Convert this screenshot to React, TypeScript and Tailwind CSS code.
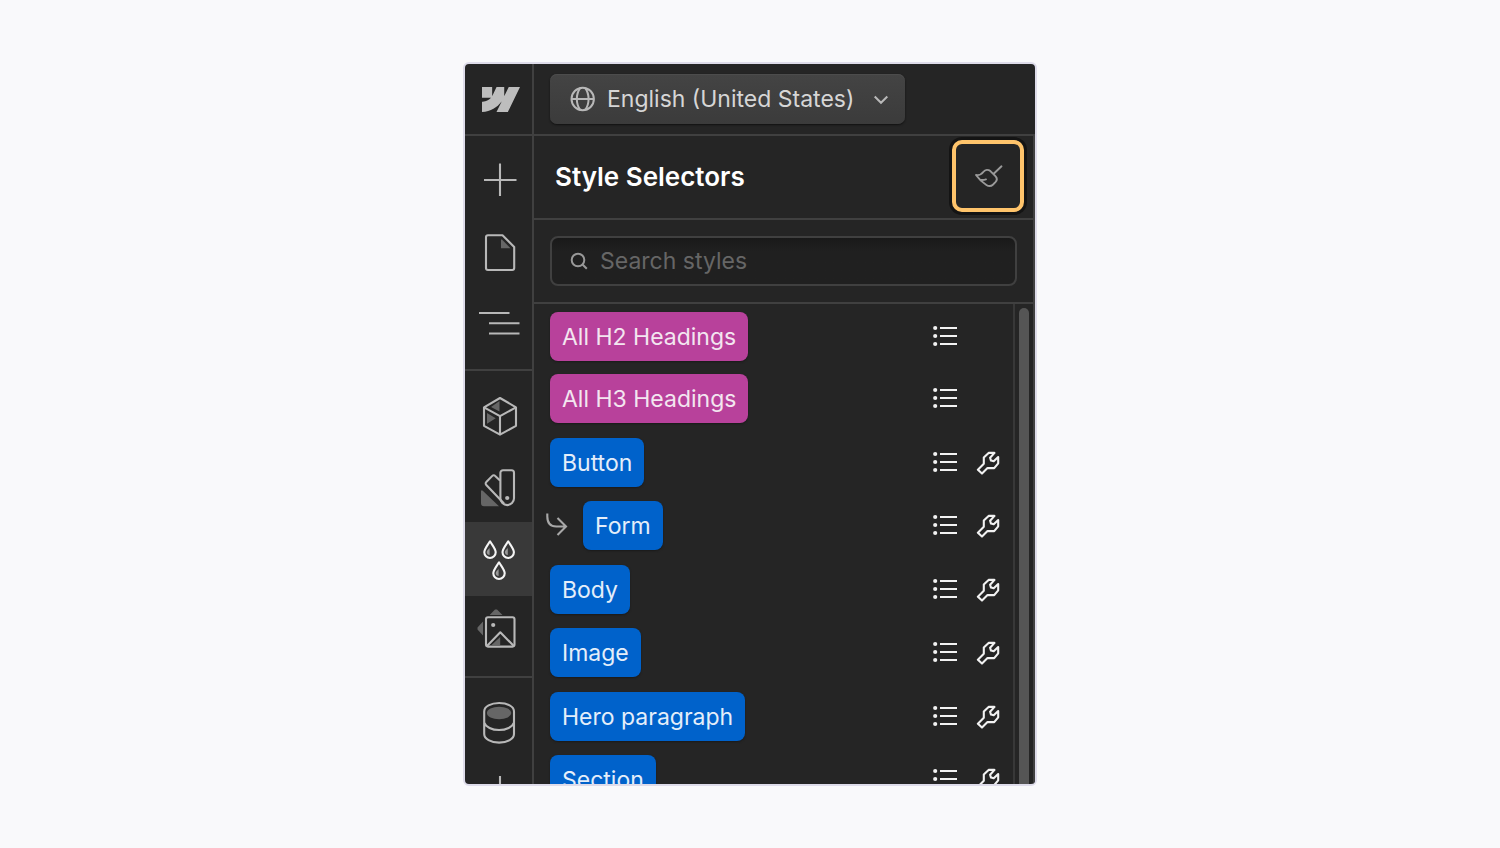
import type { ReactNode } from "react";

type Selector = { name: string; kind: "tag" | "class"; nested?: boolean };

const selectors: Selector[] = [
  { name: "All H2 Headings", kind: "tag" },
  { name: "All H3 Headings", kind: "tag" },
  { name: "Button", kind: "class" },
  { name: "Form", kind: "class", nested: true },
  { name: "Body", kind: "class" },
  { name: "Image", kind: "class" },
  { name: "Hero paragraph", kind: "class" },
  { name: "Section", kind: "class" },
];

function RailButton({ label, active, children }: { label: string; active?: boolean; children: ReactNode }) {
  return (
    <button
      type="button"
      aria-label={label}
      aria-pressed={active}
      className={active ? "block h-[74px] w-full bg-[#393939] text-[#f5f5f5]" : "block h-[72px] w-full text-[#b8b8b8]"}
    >
      <svg viewBox="0 0 67 72" width="67" height="72" fill="none" stroke="currentColor" strokeWidth="2.1" strokeLinejoin="round">
        {children}
      </svg>
    </button>
  );
}

function Drop({ x, y }: { x: number; y: number }) {
  return (
    <g transform={`translate(${x} ${y})`}>
      <path d="M0 1.3C-2.2 5-5.7 8.800-5.700 12.300a5.700 5.700 0 0 0 11.400 0C5.700 8.800 2.200 5 0 1.300Z" />
      <path d="M-.4 8C-1.500 9.300-3.300 10.500-3.300 12.300c0 1.500 1.300 2.600 2.900 2.800Z" fill="#999" stroke="none" />
    </g>
  );
}

function Rail() {
  return (
    <nav aria-label="Tools" className="flex flex-col overflow-hidden border-r-2 border-[#404040]">
      <div className="shrink-0 border-b-2 border-[#404040] pb-[9px] pt-2">
        <RailButton label="Add element">
          <path d="M19 36h32.500M35 19.500v32.500" />
        </RailButton>
        <RailButton label="Pages">
          <path d="M23 19.200H37.500L49.200 31V52a2 2 0 0 1-2 2H23a2 2 0 0 1-2-2V21.200a2 2 0 0 1 2-2Z" />
          <path d="M36 23.500h1l8.500 8.800H36Z" fill="#666" stroke="none" />
        </RailButton>
        <RailButton label="Navigator">
          <path d="M14 25h30.500M24 35.200h30.500M24 45.500h30.500" />
        </RailButton>
      </div>
      <div className="shrink-0 border-b-2 border-[#404040] pb-2 pt-[7px]">
        <RailButton label="Components">
          <g transform="translate(0 1)">
            <path d="M35 19l16 9.300v18.500L35 55.700 19 46.800V28.300ZM19 28.300 35 37.200l16-8.900M35 37.200v18.500" />
            <path d="M34.500 22v10.500L26 28ZM22 34l8.700 5.200L22 44.700Z" fill="#666" stroke="none" />
          </g>
        </RailButton>
        <RailButton label="Variables">
          <g transform="translate(0 1)">
            <path d="M38 19.300h8.500a2.500 2.500 0 0 1 2.500 2.500v25.500a6.800 6.800 0 0 1-13.600 0V21.800a2.500 2.500 0 0 1 2.600-2.500Z" />
            <path d="M35 29.500l-4.800-4.600a2 2 0 0 0-2.900 0l-6 6.200a2 2 0 0 0 0 2.900L39 52.500" />
            <path d="M16 39.500h1.500L34 55.300H19a3 3 0 0 1-3-3Z" fill="#666" stroke="none" />
            <circle cx="42.200" cy="47" r="2.100" fill="currentColor" stroke="none" />
          </g>
        </RailButton>
        <RailButton label="Style selectors" active>
          <Drop x={25} y={17} />
          <Drop x={43.2} y={17} />
          <Drop x={34} y={38} />
        </RailButton>
        <RailButton label="Assets">
          <g transform="translate(0 2)">
            <rect x="21" y="19.300" width="28.500" height="29.300" rx="2" />
            <path d="M22 48 35.300 34.300l13.500 13.700" />
            <circle cx="28.200" cy="27" r="2.100" fill="currentColor" stroke="none" />
            <path d="M24.700 17 30 11.500h2l5.500 5.500ZM18 23.500v14l-5.500-6v-2ZM26 47.500l9.200-8.500v8.500Z" fill="#666" stroke="none" />
          </g>
        </RailButton>
      </div>
      <div className="shrink-0 pt-2">
        <RailButton label="CMS">
          <path d="M19.200 25.500c0-5 6.600-8.500 14.900-8.500S49 20.500 49 25.500V48c0 5-6.600 8.600-14.900 8.600S19.200 53 19.200 48ZM19.200 36.500c1.500 4.500 7.800 7.500 14.900 7.500S47.500 41 49 36.500" />
          <ellipse cx="34.100" cy="27" rx="12.200" ry="6.200" fill="#666" stroke="none" />
        </RailButton>
        <RailButton label="More">
          <path d="M19 34h33M35 18v33" />
        </RailButton>
      </div>
    </nav>
  );
}

function ListIcon() {
  return (
    <svg viewBox="0 0 26 22" width="26" height="22" fill="none" stroke="currentColor" strokeWidth="2">
      <path d="M8 3h17M8 11h17M8 19h17" />
      <path d="M3.200 3h.01M3.200 11h.01M3.200 19h.01" strokeWidth="4.200" strokeLinecap="round" />
    </svg>
  );
}

function WrenchIcon() {
  return (
    <svg viewBox="0 0 24 24" width="24" height="24" fill="none" stroke="currentColor" strokeWidth="2.1" strokeLinejoin="round">
      <path d="M1.900 18.700 6 22.600l5.500-5.500h6.700l4-4.800V6l-4.500 4.300-2.700-.7-.9-2.900 4.400-4.800h-5.900L7.800 6.500v6.300Z" />
    </svg>
  );
}

function SelectorRow({ selector }: { selector: Selector }) {
  return (
    <li className="flex shrink-0 items-start first:pt-px odd:h-[63px] even:h-[64px]">
      {selector.nested && (
        <svg viewBox="0 0 37 49" width="37" height="49" className="-ml-1 shrink-0 text-[#a8a8a8]" fill="none" stroke="currentColor" strokeWidth="2.1">
          <path d="M1.300 12.500v3c0 6.500 3.500 10 9 10h9.700M11.500 17l8.500 8.500-8.500 8.500" />
        </svg>
      )}
      <button
        type="button"
        className={
          selector.kind === "tag"
            ? "h-[49px] rounded-[8px] bg-[#b8419b] px-3 text-[23px] leading-[50px] text-[#f3e6f0] shadow-[0_1px_2px_#1a1a1a]"
            : "h-[49px] rounded-[8px] bg-[#0062cb] px-3 text-[23px] leading-[50px] text-[#e4eefa] shadow-[0_1px_2px_#1a1a1a]"
        }
      >
        {selector.name}
      </button>
      <div className="ml-auto grid h-[48px] grid-cols-[26px_24px] items-center gap-x-[18px] text-[#f2f2f2]">
        <button type="button" aria-label={`Usages of ${selector.name}`}>
          <ListIcon />
        </button>
        {selector.kind === "class" && (
          <button type="button" aria-label={`Edit ${selector.name}`} className="pt-0.5">
            <WrenchIcon />
          </button>
        )}
      </div>
    </li>
  );
}

export default function App() {
  return (
    <main className="flex h-screen justify-center bg-[#f9f9fb] py-[62px] font-['Inter','Liberation_Sans',sans-serif]">
      <section className="flex w-full max-w-[574px] flex-col overflow-hidden rounded-[6px] border-2 border-[#dedcea] bg-[#252525]">
        <header className="grid shrink-0 grid-cols-[69px_1fr] border-b-2 border-[#404040]">
          <a href="#home" aria-label="Webflow" className="flex items-center justify-center border-r-2 border-[#404040] pl-1 text-[#bdbdbd]">
            <svg viewBox="0 4.515 24 14.970" width="38" height="25" preserveAspectRatio="none" fill="currentColor">
              <path d="M24 4.515l-7.658 14.970H9.149l3.205-6.204h-.144C9.566 16.713 5.621 18.973 0 19.485v-6.118s3.596-.213 5.710-2.435H0V4.515h6.417v5.278l.144-.001 2.622-5.277h4.854v5.244h.144l2.720-5.244H24Z" />
            </svg>
          </a>
          <div className="flex h-[70px] items-center px-4">
            <button
              type="button"
              className="flex h-[50px] items-center rounded-[7px] bg-linear-to-b from-[#444444] to-[#3b3b3b] pl-5 pr-4 text-[23px] text-[#d6d6d6] shadow-[0_1px_2px_#111111,inset_0_1px_0_#4c4c4c]"
            >
              <svg viewBox="0 0 26 26" width="26" height="26" fill="none" stroke="#b8b8b8" strokeWidth="2">
                <circle cx="12.700" cy="13" r="11.200" />
                <path d="M1.700 13h22M10.200 1.900C5.700 8.500 5.700 17.500 10.200 24.100M15.200 1.900c4.500 6.600 4.500 15.600 0 22.200" />
              </svg>
              <span className="ml-[11px]">English (United States)</span>
              <svg viewBox="0 0 16 10" width="16" height="10" className="ml-[19px] mt-0.5" fill="none" stroke="#b8b8b8" strokeWidth="2">
                <path d="M1.700 1.500 8 7.800l6.300-6.300" />
              </svg>
            </button>
          </div>
        </header>

        <div className="grid min-h-0 flex-1 grid-cols-[69px_1fr]">
          <Rail />
          <div className="flex min-h-0 flex-col border-r-2 border-[#404040]">
            <div className="flex h-[84px] shrink-0 items-center justify-between border-b-2 border-[#404040] pb-0.5 pl-[21px] pr-[9px]">
              <h1 className="text-[26px] font-semibold text-white">Style Selectors</h1>
              <button
                type="button"
                aria-label="Clean up styles"
                className="flex h-[72px] w-[72px] items-center justify-center rounded-[10px] border-4 border-[#ffc46b] text-[#999999] shadow-[0_0_0_3px_#141414]"
              >
                <svg viewBox="0 0 30 26" width="30" height="26" fill="none" stroke="currentColor" strokeWidth="1.9" strokeLinecap="round" strokeLinejoin="round">
                  <path d="M28.500 3.300 20.700 10.800M3 12c3.300.6 5.600-.8 7.500-3.300 1.800-2.300 4.600-2.400 6.900-.6l5 5c1.900 2 1.700 4.300 0 6.100l-2.300 2.300c-2 1.900-4.400 2-6.700.5C9.300 19.400 6 16.300 3 12ZM7.500 16.900c2 .2 3.800.1 5.500-.5" />
                </svg>
              </button>
            </div>

            <div className="shrink-0 border-b-2 border-[#404040] px-4 py-4">
              <label className="flex h-[50px] items-center rounded-[8px] border-2 border-[#404040] bg-linear-to-b from-[#191919] to-[#202020] to-30% pl-[18px]">
                <svg viewBox="0 0 18 18" width="18" height="18" className="shrink-0" fill="none" stroke="#999" strokeWidth="2">
                  <circle cx="8" cy="8" r="6.300" />
                  <path d="m12.500 12.500 4.300 4.300" />
                </svg>
                <input
                  type="text"
                  aria-label="Search styles"
                  placeholder="Search styles"
                  className="ml-3 h-full w-full min-w-0 bg-transparent text-[23px] leading-9 text-white outline-none placeholder:text-[#666666]"
                />
              </label>
            </div>

            <div className="flex min-h-0 flex-1">
              <ul className="flex min-w-0 flex-1 flex-col overflow-hidden border-r-2 border-[#383838] pl-4 pr-[13px] pt-[7px]">
                {selectors.map((selector) => (
                  <SelectorRow key={selector.name} selector={selector} />
                ))}
              </ul>
              <div className="flex w-[18px] justify-center overflow-hidden pt-1">
                <div className="w-[10px] rounded-t-full bg-[#555555]" />
              </div>
            </div>
          </div>
        </div>
      </section>
    </main>
  );
}
